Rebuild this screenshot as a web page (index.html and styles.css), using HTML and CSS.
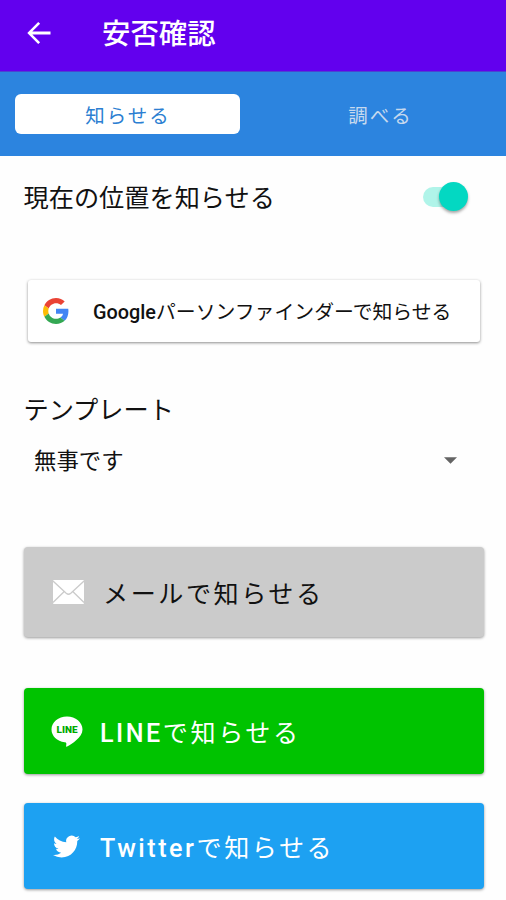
FILE: index.html
```html
<!DOCTYPE html>
<html lang="ja">
<head>
<meta charset="utf-8">
<title>安否確認</title>
<link rel="stylesheet" href="styles.css">
</head>
<body>
<header class="appbar">
  <svg class="back" viewBox="0 0 24 24"><path d="M23.500 10.600H5.300l7.800-7.800L11.200.9.300 12l10.900 11.100 1.900-1.900-7.800-7.800h18.200z"/></svg>
  <h1 class="title">安否確認</h1>
</header>
<nav class="tabs">
  <div class="tab active">知らせる</div>
  <div class="tab">調べる</div>
</nav>
<main class="content">
  <div class="location">
    <span class="label">現在の位置を知らせる</span>
    <span class="switch"><span class="thumb"></span></span>
  </div>
  <div class="google">
    <svg class="google-icon" viewBox="0 0 48 48">
      <path fill="#ea4335" d="M24 9.5c3.54 0 6.71 1.22 9.21 3.6l6.85-6.85C35.9 2.38 30.47 0 24 0 14.62 0 6.51 5.38 2.56 13.22l7.98 6.19C12.43 13.72 17.74 9.5 24 9.5z"/>
      <path fill="#4285f4" d="M46.98 24.55c0-1.57-.15-3.09-.38-4.55H24v9.02h12.94c-.58 2.96-2.26 5.48-4.78 7.18l7.73 6c4.51-4.18 7.09-10.36 7.09-17.65z"/>
      <path fill="#fbbc05" d="M10.53 28.59A14.5 14.5 0 0 1 9.77 24c0-1.6.27-3.14.76-4.59l-7.98-6.19A24 24 0 0 0 0 24c0 3.88.92 7.54 2.56 10.78z"/>
      <path fill="#34a853" d="M24 48c6.48 0 11.93-2.13 15.89-5.81l-7.73-6c-2.15 1.45-4.92 2.3-8.16 2.3-6.26 0-11.57-4.22-13.47-9.91l-7.98 6.19C6.51 42.62 14.62 48 24 48z"/>
    </svg>
    <span><span class="latin">Google</span>パーソンファインダーで知らせる</span>
  </div>
  <div class="label template">テンプレート</div>
  <div class="select">
    <span>無事です</span>
    <svg class="caret" viewBox="0 0 14 7"><path d="M0 0h14L7 7z"/></svg>
  </div>
  <div class="button mail">
    <svg class="mail-icon" viewBox="0 0 31 24">
      <rect width="31" height="24" rx="1" fill="#fff"/>
      <path d="M0 1l13.2 12.2q2.3 2 4.6 0L31 1M0 22.5l11-10.8M31 22.5L20 11.7" fill="none" stroke="#cbcbcb" stroke-width="1.3"/>
    </svg>
    <span>メールで知らせる</span>
  </div>
  <div class="button line">
    <svg class="line-icon" viewBox="0 0 32 31">
      <path fill="#fff" d="M16 .5C7.3.5.5 6.200.5 13.500c0 6.500 5.600 11.800 13.200 12.800 2 .3 1.800 1.200 1.400 4 .1.500.5.500 1 .2C20.500 28 31.500 21.500 31.500 13.500 31.500 6.200 24.600.5 16 .5z"/>
      <text class="line-name" x="16" y="17" text-anchor="middle" textLength="21" lengthAdjust="spacingAndGlyphs">LINE</text>
    </svg>
    <span><span class="latin">LINE</span>で知らせる</span>
  </div>
  <div class="button twitter">
    <svg class="twitter-icon" viewBox="0 0 24 24"><path fill="#fff" d="M23.953 4.570a10 10 0 0 1-2.825.775 4.958 4.958 0 0 0 2.163-2.723c-.951.555-2.005.959-3.127 1.184a4.920 4.920 0 0 0-8.384 4.482C7.690 8.095 4.067 6.130 1.640 3.162a4.822 4.822 0 0 0-.666 2.475c0 1.710.870 3.213 2.188 4.096a4.904 4.904 0 0 1-2.228-.616v.06a4.923 4.923 0 0 0 3.946 4.827 4.996 4.996 0 0 1-2.212.085 4.936 4.936 0 0 0 4.604 3.417 9.867 9.867 0 0 1-6.102 2.105c-.390 0-.779-.023-1.170-.067a13.995 13.995 0 0 0 7.557 2.209c9.053 0 13.998-7.496 13.998-13.985 0-.210 0-.420-.015-.630A9.935 9.935 0 0 0 24 4.590z"/></svg>
    <span><span class="latin">Twitter</span>で知らせる</span>
  </div>
</main>
</body>
</html>
```
FILE: styles.css
```css
* { box-sizing: border-box; }
body {
  margin: 0;
  height: 900px;
  overflow: hidden;
  background: #fefefe;
  color: #111;
  font-family: Roboto, "Noto Sans CJK JP", sans-serif;
  white-space: nowrap;
}
svg { display: block; flex: none; }
.latin { font-weight: 500; }
.appbar {
  display: flex;
  align-items: center;
  height: 72px;
  padding: 0 0 6px 27px;
  background: #6200ee;
  border-bottom: 1px solid #4a45d0;
  color: #fff;
}
.back { width: 24px; height: 24px; fill: #fff; }
.title {
  margin: 5px 0 0 51px;
  font-size: 28.4px;
  line-height: 40px;
  font-weight: 500;
}
.tabs {
  display: flex;
  height: 84px;
  padding: 22px 13px 22px 15px;
  gap: 28px;
  background: #2c84df;
}
.tab {
  flex: 1;
  display: flex;
  align-items: center;
  justify-content: center;
  border-radius: 6px;
  color: #c6d9ee;
  font-size: 19.5px;
  letter-spacing: 2px;
}
.tab.active { flex: 0 0 225px; padding-left: 1px; background: #fff; color: #2c7fd2; }
.content { padding: 0 22px 0 24px; }
.location {
  display: flex;
  align-items: center;
  justify-content: space-between;
  height: 82px;
  padding-right: 16px;
}
.label { margin-left: -.5px; font-size: 25.2px; line-height: 36px; }
.location .label { padding-top: 3px; }
.switch {
  display: flex;
  align-items: center;
  justify-content: flex-end;
  width: 45px;
  height: 20px;
  border-radius: 10px;
  background: linear-gradient(90deg, #b0f4e9 30px, transparent 30px);
}
.thumb {
  width: 29px;
  height: 29px;
  margin-top: -1px;
  border-radius: 50%;
  background: #03d8c2;
  box-shadow: 0 2px 3px rgba(0, 0, 0, .35);
}
.google {
  display: flex;
  align-items: center;
  height: 62px;
  margin: 42px 4px 0;
  padding: 0 0 1px 15px;
  border-radius: 3px;
  background: #fff;
  box-shadow: 0 1px 3px rgba(0, 0, 0, .45);
  font-size: 19.85px;
}
.google-icon { width: 26px; height: 26px; margin-right: 24px; }
.template { margin-top: 51px; }
.select {
  display: flex;
  align-items: center;
  justify-content: space-between;
  height: 36px;
  margin-top: 13px;
  padding: 0 27px 0 10px;
  font-size: 22.4px;
}
.select span { padding-bottom: 2px; }
.caret { width: 13px; height: 7px; fill: #646464; }
.button {
  display: flex;
  align-items: center;
  height: 86px;
  margin-left: -.5px;
  border-radius: 4px;
  box-shadow: 0 1px 3px rgba(0, 0, 0, .4);
  color: #fff;
  font-size: 25.1px;
  letter-spacing: 2.55px;
}
.button > span { padding-bottom: 1px; }
.mail { height: 90px; margin-top: 69px; padding-left: 29px; background: #cbcbcb; color: #111; }
.mail-icon { width: 31px; height: 24px; margin-right: 19.5px; }
.line { margin-top: 51px; padding-left: 27px; background: #00c300; }
.line-icon { width: 32px; height: 31px; margin-right: 17.5px; }
.line-name { fill: #00a900; font-family: Roboto, sans-serif; font-size: 9.5px; font-weight: 900; letter-spacing: 0; }
.twitter { margin-top: 29px; padding-left: 29px; background: #1da1f2; }
.twitter-icon { width: 27px; height: 27px; margin-right: 20.5px; }
```
